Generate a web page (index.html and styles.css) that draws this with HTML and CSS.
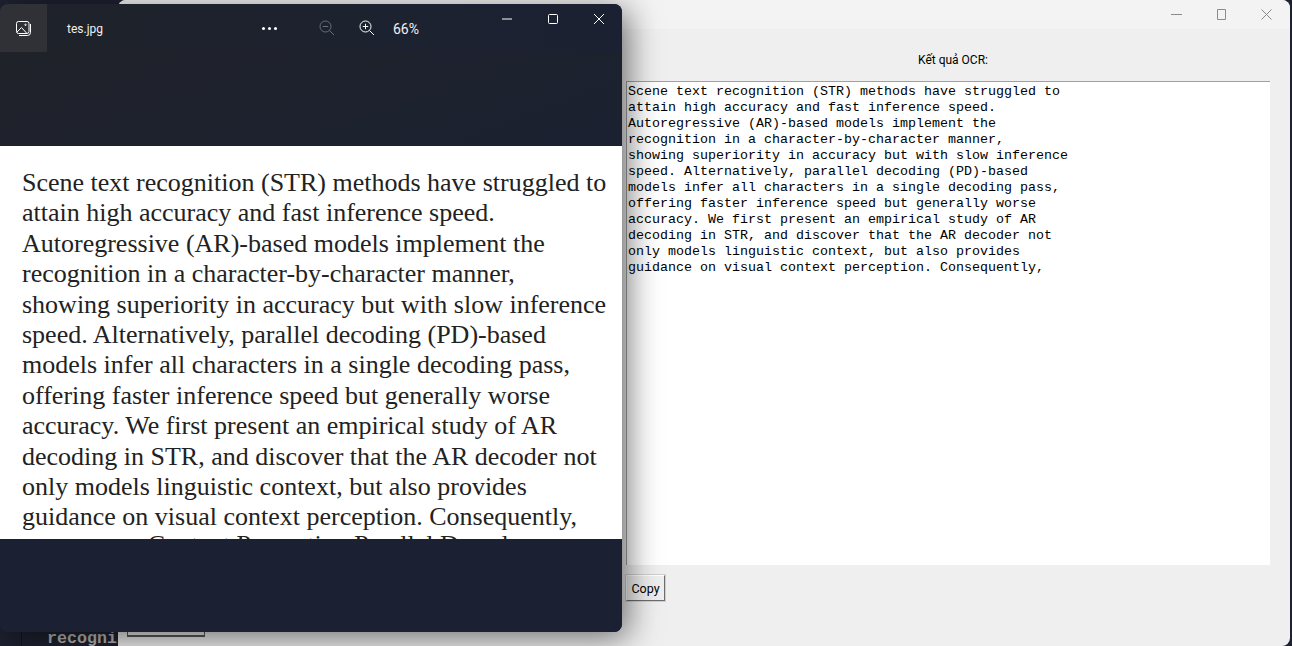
FILE: index.html
```html
<!DOCTYPE html>
<html lang="vi">
<head>
  <meta charset="UTF-8">
  <title>OCR</title>
  <link rel="stylesheet" href="styles.css">
</head>
<body>
  <div class="desktop">
    <!-- what is left of the editor behind both windows -->
    <div class="behind">
      <span class="behind_line"></span>
      <span class="behind_text">recogni</span>
    </div>

    <!-- tkinter window -->
    <div class="ocr_window">
      <div class="ocr_titlebar">
        <svg class="ocr_ctl" viewBox="0 0 11 11"><path d="M0 5.5H11"/></svg>
        <svg class="ocr_ctl" viewBox="0 0 11 11"><path d="M1.5 .5H9.5V10.5H1.5Z"/></svg>
        <svg class="ocr_ctl" viewBox="0 0 11 11"><path d="M.5 .5L10.5 10.5M10.5 .5L.5 10.5"/></svg>
      </div>
      <div class="ocr_body">
        <div class="ocr_label">Kết quả OCR:</div>
        <textarea class="ocr_text" spellcheck="false">Scene text recognition (STR) methods have struggled to
attain high accuracy and fast inference speed.
Autoregressive (AR)-based models implement the
recognition in a character-by-character manner,
showing superiority in accuracy but with slow inference
speed. Alternatively, parallel decoding (PD)-based
models infer all characters in a single decoding pass,
offering faster inference speed but generally worse
accuracy. We first present an empirical study of AR
decoding in STR, and discover that the AR decoder not
only models linguistic context, but also provides
guidance on visual context perception. Consequently,</textarea>
        <button class="copy_button">Copy</button>
      </div>
      <span class="behind_button"></span>
    </div>

    <!-- photos window -->
    <div class="photo_window">
      <div class="photo_toolbar">
        <div class="photo_tab">
          <svg width="15" height="15" viewBox="0 0 15 15" class="icon">
            <rect x=".5" y=".5" width="12.5" height="12" rx="2"/>
            <path d="M14.5 3V11.5A3 3 0 0 1 11.5 14.5H3"/>
            <path d="M1 11L5.5 6.5L10.5 12"/>
            <circle cx="9.5" cy="3.8" r=".7"/>
          </svg>
        </div>
        <span class="photo_name">tes.jpg</span>
        <span class="photo_more"><i></i><i></i><i></i></span>
        <svg width="16" height="16" viewBox="0 0 16 16" class="icon zoom_out">
          <circle cx="6.5" cy="6.5" r="5.5"/>
          <path d="M3.8 6.5H9.2M10.5 10.5L15 15"/>
        </svg>
        <svg width="16" height="16" viewBox="0 0 16 16" class="icon zoom_in">
          <circle cx="6.5" cy="6.5" r="5.5"/>
          <path d="M3.8 6.5H9.2M6.5 3.8V9.2M10.5 10.5L15 15"/>
        </svg>
        <span class="photo_zoom">66%</span>
        <div class="photo_controls">
          <svg width="10" height="10" viewBox="0 0 10 10" class="icon"><path d="M0 5H10" /></svg>
          <svg width="10" height="10" viewBox="0 0 10 10" class="icon"><rect x=".5" y=".5" width="9" height="9" rx="1"/></svg>
          <svg width="10" height="10" viewBox="0 0 10 10" class="icon"><path d="M0 0L10 10M10 0L0 10"/></svg>
        </div>
      </div>
      <div class="photo_stage">
        <div class="photo_page">
          <p>Scene text recognition (STR) methods have struggled to</p>
          <p>attain high accuracy and fast inference speed.</p>
          <p>Autoregressive (AR)-based models implement the</p>
          <p>recognition in a character-by-character manner,</p>
          <p>showing superiority in accuracy but with slow inference</p>
          <p>speed. Alternatively, parallel decoding (PD)-based</p>
          <p>models infer all characters in a single decoding pass,</p>
          <p>offering faster inference speed but generally worse</p>
          <p>accuracy. We first present an empirical study of AR</p>
          <p>decoding in STR, and discover that the AR decoder not</p>
          <p>only models linguistic context, but also provides</p>
          <p>guidance on visual context perception. Consequently,</p>
          <p class="photo_cut">we propose Context Perception Parallel Decoder</p>
        </div>
      </div>
    </div>
  </div>
</body>
</html>
```

FILE: styles.css
```css
html,body{
    height: 100%;
    margin: 0;
    overflow: hidden;
}
.desktop{
    position: relative;
    width: 1292px;
    height: 646px;
    overflow: hidden;
    background: #1e2130;
}

.behind{
    position: absolute;
    left: 0;
    top: 625px;
    width: 130px;
    height: 21px;
}
.behind_line{
    position: absolute;
    left: 21px;
    top: 0;
    width: 1px;
    height: 21px;
    background: #14161f;
}
.behind_text{
    position: absolute;
    left: 47px;
    top: 4px;
    font: bold 16.67px "Liberation Mono", monospace;
    color: #b8b8b8;
}
.behind_button{
    position: absolute;
    left: 9px;
    top: 625px;
    width: 78px;
    height: 12px;
    box-sizing: border-box;
    border: 1px solid #5a5a5a;
    border-top: 0;
    border-bottom-width: 2px;
}

.ocr_window{
    position: absolute;
    left: 118px;
    top: 0;
    width: 1172px;
    height: 646px;
    display: flex;
    flex-direction: column;
    background: #efefef;
    border-radius: 8px 8px 8px 0;
    font-family: Roboto, "Noto Sans", sans-serif;
}
.ocr_titlebar{
    height: 29px;
    flex: none;
    display: flex;
    justify-content: flex-end;
    align-items: center;
    gap: 34px;
    padding-right: 18px;
    background: #f3f3f3;
    border-radius: 8px 8px 0 0;
}
.ocr_ctl{
    width: 11px;
    height: 11px;
    fill: none;
    stroke: #8b8b8b;
    stroke-width: 1;
}
.ocr_body{
    padding-left: 508px;
}
.ocr_label{
    margin-top: 24px;
    height: 28px;
    width: 654px;
    text-align: center;
    font-size: 12px;
    line-height: 15px;
    color: #000;
}
.ocr_text{
    display: block;
    box-sizing: border-box;
    width: 644px;
    height: 484px;
    margin: 0;
    padding: 2px 1px;
    border: 0;
    border-top: 1px solid #a0a0a0;
    border-left: 1px solid #a0a0a0;
    border-radius: 0;
    outline: none;
    resize: none;
    overflow: hidden;
    font: 13.33px/16px "Liberation Mono", "Courier New", monospace;
    white-space: pre;
    color: #000;
    background: #fff;
}
.copy_button{
    display: block;
    box-sizing: border-box;
    width: 39px;
    height: 26px;
    margin-top: 10px;
    padding: 0;
    font: 12.5px Roboto, sans-serif;
    color: #000;
    background: #efefef;
    border: 1px solid;
    border-color: #fff #6e6e6e #6e6e6e #fff;
    box-shadow: 0 0 0 1px #d0d0d0;
}

.photo_window{
    position: absolute;
    left: 0;
    top: 4px;
    width: 622px;
    height: 628px;
    display: flex;
    flex-direction: column;
    background: #1b2132;
    border-radius: 8px;
    box-shadow: 6px 6px 32px rgba(0,0,0,.55);
    overflow: hidden;
    font-family: Roboto, "Noto Sans", sans-serif;
    color: #fff;
}
.photo_toolbar{
    position: relative;
    height: 48px;
    flex: none;
    display: flex;
    align-items: center;
    background: linear-gradient(90deg, #1f2229 0%, #1d2230 60%, #1b2132 100%);
}
.photo_stage{
    flex: 1;
    padding-top: 94px;
    padding-bottom: 93px;
    background: linear-gradient(160deg, #1f2229 0%, #1b2132 45%);
}
.photo_tab{
    width: 47px;
    height: 48px;
    display: flex;
    align-items: center;
    justify-content: center;
    background: #303136;
}
.icon{
    fill: none;
    stroke: #fff;
    stroke-width: 1;
    flex: none;
}
.photo_name{
    margin-left: 20px;
    width: 195px;
    padding-top: 2px;
    font-size: 12px;
    color: #f0f0f0;
}
.photo_more{
    display: flex;
    gap: 3px;
    width: 57px;
}
.photo_more i{
    width: 3px;
    height: 3px;
    border-radius: 50%;
    background: #fff;
}
.zoom_out{
    stroke: #6c6f77;
}
.zoom_in{
    margin-left: 24px;
}
.photo_zoom{
    margin-left: 18px;
    padding-top: 2px;
    font-size: 14px;
    color: #f0f0f0;
}
.photo_controls{
    position: absolute;
    top: 10px;
    right: 18px;
    display: flex;
    gap: 36px;
}
.photo_page{
    height: 393px;
    overflow: hidden;
    box-sizing: border-box;
    padding: 22px 0 0 22px;
    background: #fff;
    color: #222;
    font: 26px/30.4px "Liberation Serif", "Times New Roman", serif;
}
.photo_page p{
    margin: 0;
    white-space: nowrap;
}
.photo_page .photo_cut{
    margin-top: -3px;
}
```
